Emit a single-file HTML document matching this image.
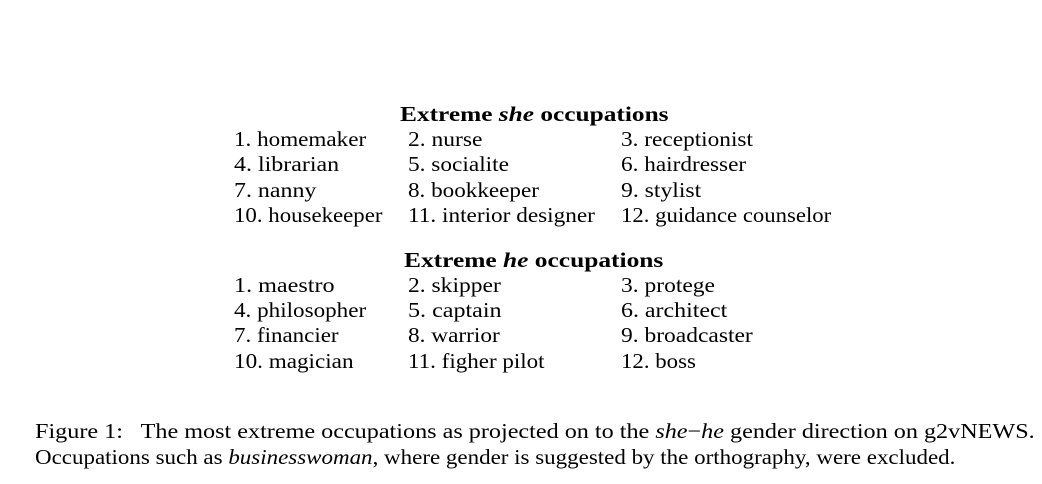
<!DOCTYPE html>
<html><head><meta charset="utf-8"><style>
body{margin:0;width:1042px;height:484px;background:#fff;overflow:hidden;position:relative;font-family:"Liberation Serif",serif;color:#000;}
.t{position:absolute;white-space:nowrap;font-family:"Liberation Serif",serif;font-size:21px;line-height:21px;transform-origin:0 0;}
b{font-weight:bold}
</style></head><body>
<div id="c"></div>
<script>
var items=[
["<b>Extreme <i>she</i> occupations</b>",400,668,121],
["1. homemaker",234,366,146],["2. nurse",408,483,146],["3. receptionist",621,753,146],
["4. librarian",234,339,171],["5. socialite",408,509,171],["6. hairdresser",621,746,171],
["7. nanny",234,316,197],["8. bookkeeper",408,539,197],["9. stylist",621,701,197],
["10. housekeeper",234,382,222],["11. interior designer",408,595,222],["12. guidance counselor",621,831,222],
["<b>Extreme <i>he</i> occupations</b>",404,663,267],
["1. maestro",234,334,292],["2. skipper",408,501,292],["3. protege",621,715,292],
["4. philosopher",234,366,317],["5. captain",408,502,317],["6. architect",621,727,317],
["7. financier",234,339,342],["8. warrior",408,500,342],["9. broadcaster",621,753,342],
["10. magician",234,353,368],["11. figher pilot",408,545,368],["12. boss",621,696,368],
["Figure 1:&nbsp;&nbsp; The most extreme occupations as projected on to the <i>she</i>&minus;<i>he</i> gender direction on g2vNEWS.",35,1035,438],
["Occupations such as <i>businesswoman</i>, where gender is suggested by the orthography, were excluded.",35,955,464]
];
var c=document.getElementById('c');var els=[];
items.forEach(function(it){
 var d=document.createElement('div');d.className='t';d.innerHTML=it[0];
 d.style.left=it[1]+'px';d.style.top=(it[3]-17)+'px';
 c.appendChild(d);els.push(d);
});
function fit(){
 els.forEach(function(d,i){
  d.style.transform='none';
  var w=d.scrollWidth||d.getBoundingClientRect().width;
  d.style.transform='scaleX('+((items[i][2]-items[i][1])/w)+')';
 });
}
fit();
if(document.fonts&&document.fonts.ready)document.fonts.ready.then(fit);
window.addEventListener('load',fit);
</script>
</body></html>
